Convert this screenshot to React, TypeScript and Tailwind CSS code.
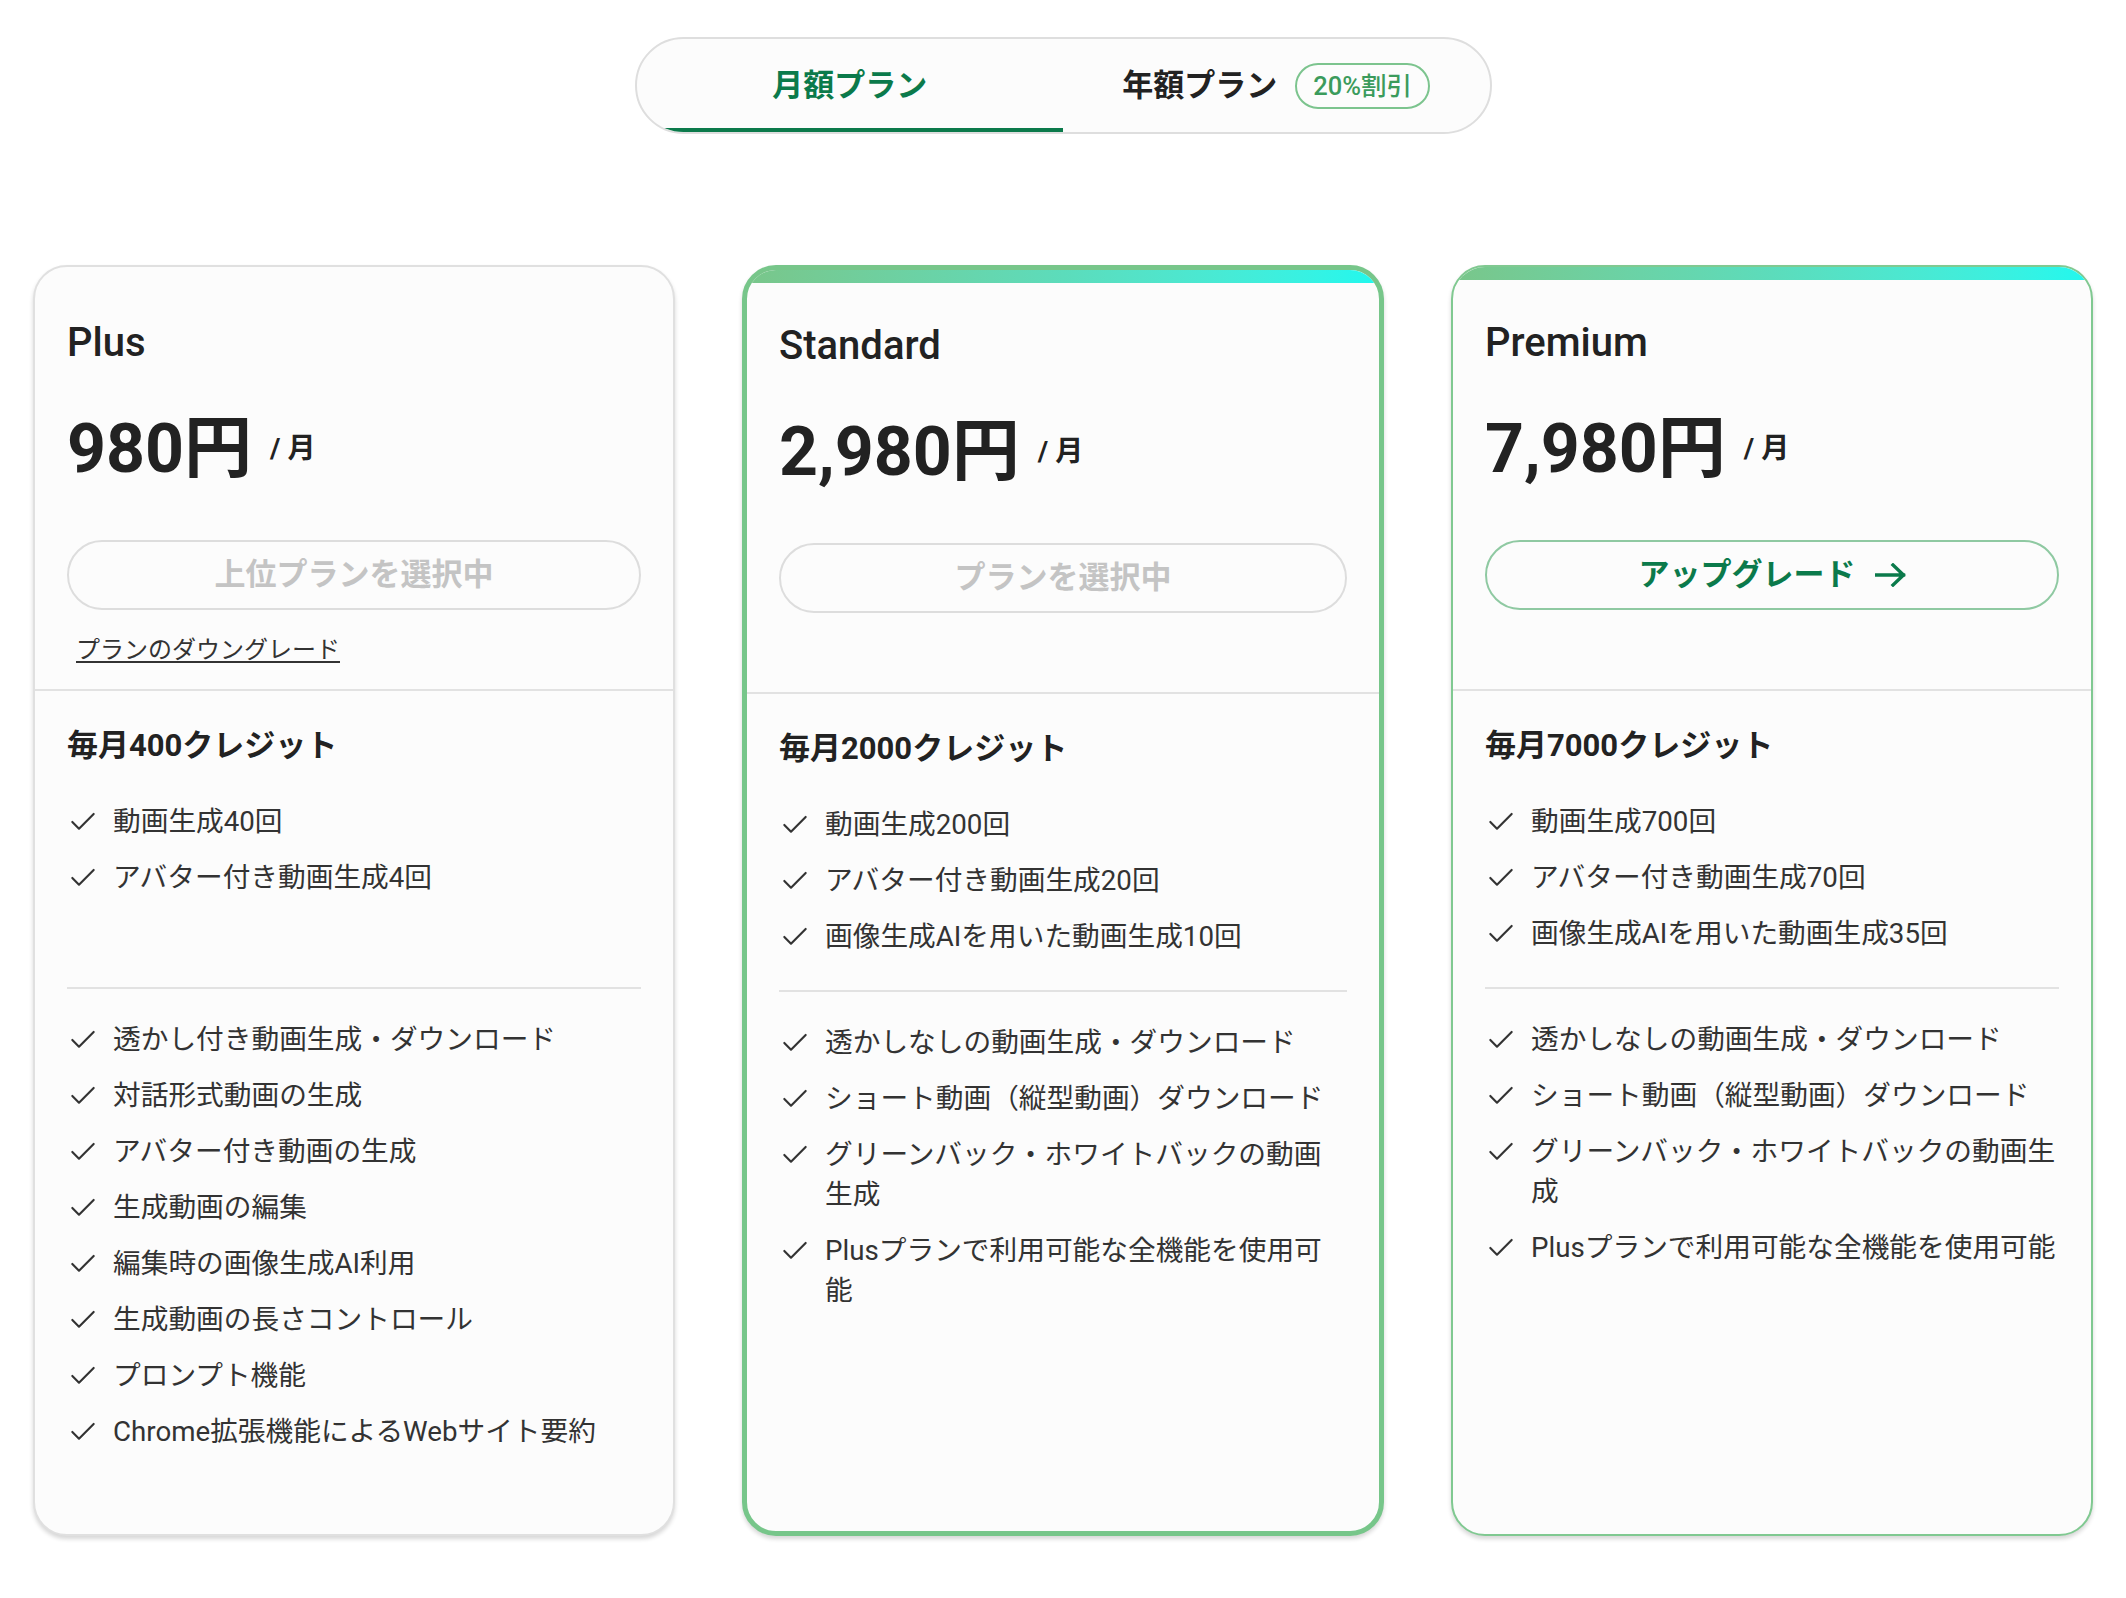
import React from "react";
import { Check } from "lucide-react";

type Plan = {
  name: string;
  price: string;
  variant: "plain" | "current" | "upgrade";
  button: string;
  showDowngrade?: boolean;
  credits: string;
  main: string[];
  extra: string[];
};

const plans: Plan[] = [
  {
    name: "Plus",
    price: "980円",
    variant: "plain",
    button: "上位プランを選択中",
    showDowngrade: true,
    credits: "毎月400クレジット",
    main: ["動画生成40回", "アバター付き動画生成4回"],
    extra: [
      "透かし付き動画生成・ダウンロード",
      "対話形式動画の生成",
      "アバター付き動画の生成",
      "生成動画の編集",
      "編集時の画像生成AI利用",
      "生成動画の長さコントロール",
      "プロンプト機能",
      "Chrome拡張機能によるWebサイト要約",
    ],
  },
  {
    name: "Standard",
    price: "2,980円",
    variant: "current",
    button: "プランを選択中",
    credits: "毎月2000クレジット",
    main: ["動画生成200回", "アバター付き動画生成20回", "画像生成AIを用いた動画生成10回"],
    extra: [
      "透かしなしの動画生成・ダウンロード",
      "ショート動画（縦型動画）ダウンロード",
      "グリーンバック・ホワイトバックの動画生成",
      "Plusプランで利用可能な全機能を使用可能",
    ],
  },
  {
    name: "Premium",
    price: "7,980円",
    variant: "upgrade",
    button: "アップグレード",
    credits: "毎月7000クレジット",
    main: ["動画生成700回", "アバター付き動画生成70回", "画像生成AIを用いた動画生成35回"],
    extra: [
      "透かしなしの動画生成・ダウンロード",
      "ショート動画（縦型動画）ダウンロード",
      "グリーンバック・ホワイトバックの動画生成",
      "Plusプランで利用可能な全機能を使用可能",
    ],
  },
];

function Feature({ text }: { text: string }) {
  return (
    <li className="flex items-start gap-[14px]">
      <span className="flex h-[40px] w-[32px] shrink-0 items-center justify-center">
        <Check size={32} strokeWidth={1.6} color="#333333" />
      </span>
      <span className="min-w-0 flex-1 text-[27.7px] leading-[40px] text-[#333333]">{text}</span>
    </li>
  );
}

function ArrowIcon() {
  return (
    <svg width="31" height="24" viewBox="0 0 31 24" fill="none" className="ml-[19px]">
      <path d="M1.5 12H28.5M18 2L28.5 12L18 22" stroke="#0b7a4b" strokeWidth="3.4" strokeLinecap="square" />
    </svg>
  );
}

function PlanCard({ plan }: { plan: Plan }) {
  const border =
    plan.variant === "current"
      ? "border-[5px] border-[#77c68a]"
      : plan.variant === "upgrade"
      ? "border-2 border-[#80c991]"
      : "border-2 border-[#e0e0e0]";
  return (
    <div
      className={`flex flex-col overflow-hidden rounded-[34px] bg-[#fcfcfc] shadow-[0_3px_4px_rgba(0,0,0,0.16)] ${border}`}
    >
      {plan.variant !== "plain" && (
        <div className="h-[13px] shrink-0 bg-linear-to-r from-[#79c68a] via-[#5cdcbb] to-[#1ff8ee]" />
      )}
      <div
        className={`flex flex-col px-8 ${
          plan.variant === "plain" ? "h-[422px] pt-[46px]" : "h-[409px] pt-[33px]"
        }`}
      >
        <h2 className="text-[40px] font-medium leading-[60px] text-[#222222]">{plan.name}</h2>
        <div className="mt-[36px] flex items-center">
          <span className="text-[68px] font-bold leading-[80px] text-[#222222]">{plan.price}</span>
          <span className="ml-[18px] text-[28px] font-bold leading-[40px] text-[#222222]">/ 月</span>
        </div>
        {plan.variant === "upgrade" ? (
          <button className="mt-[51px] flex h-[70px] w-full items-center justify-center rounded-full border-2 border-[#8fc9a2] bg-[#fcfcfc] text-[31px] font-bold text-[#0b7a4b]">
            {plan.button}
            <ArrowIcon />
          </button>
        ) : (
          <button className="mt-[51px] flex h-[70px] w-full items-center justify-center rounded-full border-2 border-[#dddddd] bg-[#fcfcfc] text-[31px] font-bold text-[#c4c4c4]">
            {plan.button}
          </button>
        )}
        {plan.showDowngrade && (
          <a className="ml-[9px] mt-[22px] self-start text-[24px] leading-[36px] text-[#333333] underline underline-offset-[3px]">
            プランのダウングレード
          </a>
        )}
      </div>
      <div className="flex flex-1 flex-col border-t-2 border-[#e2e2e2] px-8 pb-[82px] pt-[32px]">
        <h3 className="mb-[33px] text-[31px] font-bold leading-[46px] text-[#222222]">{plan.credits}</h3>
        <ul className="flex h-[185px] flex-col gap-[16px]">
          {plan.main.map((t) => (
            <Feature key={t} text={t} />
          ))}
        </ul>
        <ul className="flex flex-col gap-[16px] border-t-2 border-[#e2e2e2] pt-[31px]">
          {plan.extra.map((t) => (
            <Feature key={t} text={t} />
          ))}
        </ul>
      </div>
    </div>
  );
}

export default function App() {
  return (
    <div className="min-h-screen bg-white pb-[60px] pt-[37px] font-[Roboto,'Noto_Sans_CJK_JP',sans-serif]">
      <div className="mx-auto flex h-[97px] w-[857px] overflow-hidden rounded-full border-2 border-[#dedede] bg-[#fcfcfc]">
        <div className="flex flex-1 flex-col">
          <div className="flex flex-1 items-center justify-center pt-[5px] text-[31px] font-bold text-[#0b7a4b]">
            月額プラン
          </div>
          <div className="h-[4px] bg-[#0b7a4b]" />
        </div>
        <div className="flex flex-1 flex-col">
          <div className="flex flex-1 items-center justify-center pt-[5px]">
            <span className="text-[31px] font-bold text-[#222222]">年額プラン</span>
            <span className="ml-[18px] flex h-[46px] items-center rounded-full border-2 border-[#7cc48e] px-[16px] text-[25.5px] font-medium text-[#3b9b5c]">
              20%割引
            </span>
          </div>
          <div className="h-[4px]" />
        </div>
      </div>
      <div className="mt-[131px] grid grid-cols-[642px_642px_642px] justify-center gap-[67px]">
        {plans.map((p) => (
          <PlanCard key={p.name} plan={p} />
        ))}
      </div>
    </div>
  );
}
